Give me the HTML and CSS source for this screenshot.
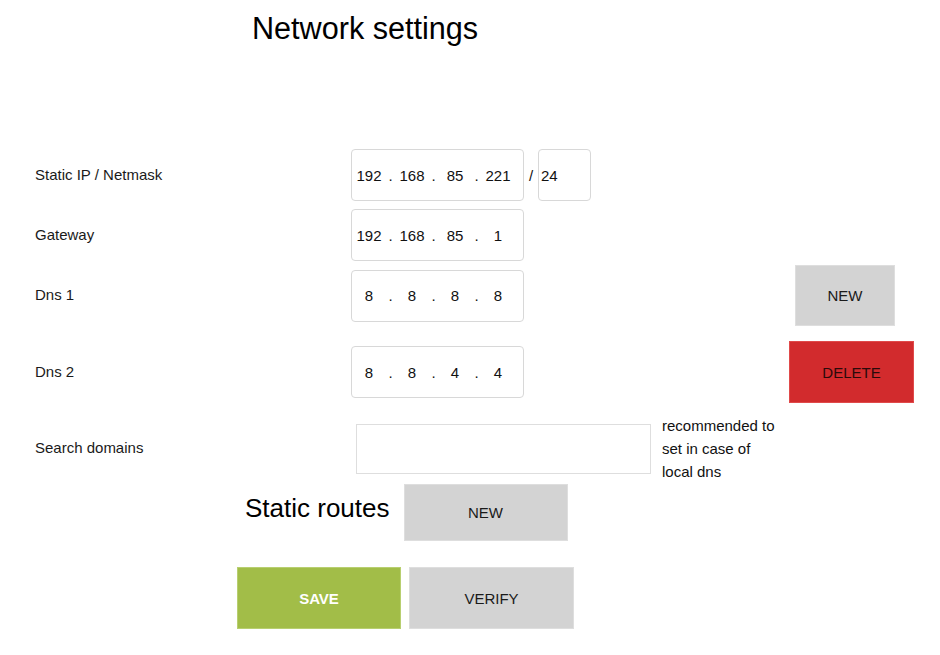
FILE: index.html
```html
<!DOCTYPE html>
<html lang="en">
<head>
<meta charset="utf-8">
<title>Network settings</title>
<link rel="stylesheet" href="styles.css">
</head>
<body>
<div class="page">
  <h1 class="title">Network settings</h1>

  <div class="form">
    <div class="row row-ip">
      <div class="label">Static IP / Netmask</div>
      <div class="field">
        <div class="ip"><span class="oct">192</span><span class="dot">.</span><span class="oct">168</span><span class="dot">.</span><span class="oct">85</span><span class="dot">.</span><span class="oct">221</span></div>
        <span class="slash">/</span>
        <div class="mask">24</div>
      </div>
    </div>

    <div class="row row-gw">
      <div class="label">Gateway</div>
      <div class="field">
        <div class="ip"><span class="oct">192</span><span class="dot">.</span><span class="oct">168</span><span class="dot">.</span><span class="oct">85</span><span class="dot">.</span><span class="oct">1</span></div>
      </div>
    </div>

    <div class="row row-dns1">
      <div class="label">Dns 1</div>
      <div class="field">
        <div class="ip"><span class="oct">8</span><span class="dot">.</span><span class="oct">8</span><span class="dot">.</span><span class="oct">8</span><span class="dot">.</span><span class="oct">8</span></div>
      </div>
      <div class="action"><button class="btn btn-gray btn-new-dns">NEW</button></div>
    </div>

    <div class="row row-dns2">
      <div class="label">Dns 2</div>
      <div class="field">
        <div class="ip"><span class="oct">8</span><span class="dot">.</span><span class="oct">8</span><span class="dot">.</span><span class="oct">4</span><span class="dot">.</span><span class="oct">4</span></div>
      </div>
      <div class="action"><button class="btn btn-red btn-delete">DELETE</button></div>
    </div>

    <div class="row row-search">
      <div class="label">Search domains</div>
      <div class="field field-search">
        <div class="search"></div>
        <div class="hint">recommended to set in case of local dns</div>
      </div>
    </div>
  </div>

  <div class="routes">
    <h2 class="subtitle">Static routes</h2>
    <button class="btn btn-gray btn-route">NEW</button>
  </div>

  <div class="footer">
    <button class="btn btn-green btn-save">SAVE</button>
    <button class="btn btn-gray btn-verify">VERIFY</button>
  </div>
</div>
</body>
</html>
```

FILE: styles.css
```css
* { box-sizing: border-box; }

html, body {
  margin: 0;
  padding: 0;
  background: #ffffff;
}

body {
  font-family: "Liberation Sans", Arial, sans-serif;
  color: #111;
  font-size: 15px;
}

.page {
  width: 940px;
  height: 655px;
  padding-top: 10px;
}

.title {
  margin: 0 0 0 252px;
  font-size: 30.6px;
  font-weight: normal;
  line-height: 36px;
  color: #000;
}

.form {
  margin-top: 103px;
  padding-left: 35px;
  display: flex;
  flex-direction: column;
}

.row {
  display: flex;
  align-items: center;
}

.row-ip { height: 52px; }
.row-gw { height: 52px; margin-top: 8px; }
.row-dns1 { height: 61px; margin-top: 4px; }
.row-dns2 { height: 62px; margin-top: 15px; }
.row-search { height: 69px; margin-top: 11px; }

.label {
  width: 316px;
  flex: none;
  color: #1a1a1a;
  padding-bottom: 2px;
}

.field {
  width: 438px;
  flex: none;
  display: flex;
  align-items: center;
}

.ip {
  width: 173px;
  height: 52px;
  border: 1px solid #d8d8d8;
  border-radius: 4px;
  display: flex;
  align-items: center;
  padding-left: 2px;
  color: #111;
}

.oct {
  width: 30px;
  text-align: center;
}

.dot {
  width: 13px;
  text-align: center;
}

.slash {
  width: 14px;
  text-align: center;
}

.mask {
  width: 53px;
  height: 52px;
  border: 1px solid #d8d8d8;
  border-radius: 4px;
  display: flex;
  align-items: center;
  padding-left: 2px;
}

.field-search {
  padding-left: 5px;
}

.search {
  width: 295px;
  height: 50px;
  border: 1px solid #dedede;
  flex: none;
}

.hint {
  width: 118px;
  margin-left: 11px;
  line-height: 23px;
  color: #111;
}

.action {
  display: flex;
}

.btn {
  border: 1px solid #dcdcdc;
  font-family: "Liberation Sans", Arial, sans-serif;
  font-size: 15px;
  color: #1a1a1a;
  padding: 0;
  margin: 0;
  cursor: pointer;
}

.btn-gray { background: #d3d3d3; border-color: #dedede; }
.btn-red { background: #d22b2d; border-color: #e04a4a; color: #2a0a0a; }
.btn-green { background: #a2bd48; border-color: #b8cf70; color: #fff; font-weight: bold; }

.btn-new-dns {
  width: 100px;
  height: 61px;
  margin-left: 6px;
}

.btn-delete {
  width: 125px;
  height: 62px;
}

.routes {
  display: flex;
  align-items: center;
  margin-top: 1px;
  padding-left: 245px;
  height: 57px;
}

.subtitle {
  margin: 0 14px 10px 0;
  font-size: 26px;
  font-weight: normal;
  line-height: 30px;
  color: #000;
}

.btn-route {
  width: 164px;
  height: 57px;
}

.footer {
  display: flex;
  gap: 8px;
  margin-top: 26px;
  padding-left: 237px;
}

.btn-save {
  width: 164px;
  height: 62px;
}

.btn-verify {
  width: 165px;
  height: 62px;
}
```
